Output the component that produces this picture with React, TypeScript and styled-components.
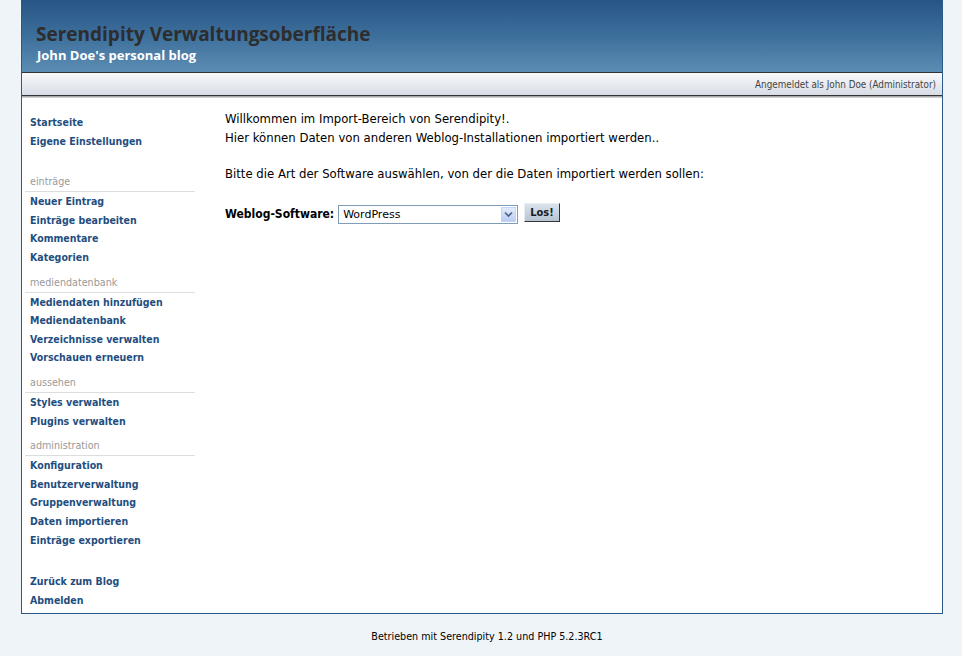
import styled, { createGlobalStyle } from "styled-components";

const GlobalStyle = createGlobalStyle`
  html, body {
    margin: 0;
    padding: 0;
    background: #eff4f9;
  }
  body {
    font-family: "DejaVu Sans", Verdana, sans-serif;
    font-size: 11px;
    color: #000;
  }
`

const Page = styled.div`
  width: 922px;
  margin-left: 21px;
`

const Frame = styled.div`
  border-left: 1px solid #2b5a8a;
  border-right: 1px solid #2b5a8a;
  border-bottom: 1px solid #2b5a8a;
  background: #fff;
`

const Banner = styled.div`
  height: 72px;
  background: linear-gradient(to bottom, #285585 0%, #3d6f9c 50%, #5b8db3 100%);
  padding-left: 14px;
  box-sizing: border-box;
  padding-top: 23px;
`

const Title = styled.h1`
  margin: 0;
  font-family: "Open Sans", sans-serif;
  font-weight: 700;
  font-size: 19px;
  line-height: 22px;
  color: #2d2d2d;
`

const Subtitle = styled.h2`
  margin: 2px 0 0 0;
  font-family: "Open Sans", sans-serif;
  font-weight: 700;
  font-size: 13px;
  line-height: 16px;
  color: #fff;
  padding-left: 1px;
`

const UserBar = styled.div`
  height: 22px;
  border-top: 1px solid #333;
  border-bottom: 1px solid #333;
  background: linear-gradient(to bottom, #f7f8fa 0%, #e9ecf1 50%, #d6dce6 100%);
  display: flex;
  align-items: center;
  justify-content: flex-end;
  padding-right: 6px;
  font-family: "DejaVu Sans Condensed", "DejaVu Sans", sans-serif;
  font-size: 9.8px;
  color: #444;
  box-shadow: 0 1px 0 #a9a9a9, 0 2px 0 #cfcfcf;
`

const Body = styled.div`
  display: flex;
  padding-top: 14px;
  padding-bottom: 4px;
`

const Sidebar = styled.nav`
  width: 170px;
  margin-left: 3px;
  padding-top: 3px;
  flex-shrink: 0;
`

const Group = styled.div<{ $gap: number }>`
  margin-bottom: ${p => p.$gap}px;
`

const GroupHead = styled.div`
  color: #999;
  font-size: 9.6px;
  line-height: 18px;
  padding-left: 5px;
  border-bottom: 1px solid #ddd;
`

const NavLink = styled.a`
  display: block;
  padding-left: 5px;
  font-family: "DejaVu Sans Condensed", "DejaVu Sans", sans-serif;
  font-weight: 700;
  font-size: 10.5px;
  line-height: 18.6px;
  color: #1f4e80;
  text-decoration: none;
`

const Main = styled.main`
  flex: 1;
  padding-left: 30px;
`

const Para = styled.p`
  margin: 0 0 18px 0;
  line-height: 18.5px;
  font-size: 11.7px;
`

const FormRow = styled.div`
  display: flex;
  align-items: center;
  gap: 4px;
  margin-top: 21px;
`

const Label = styled.label`
  font-family: "DejaVu Sans Condensed", "DejaVu Sans", sans-serif;
  font-weight: 700;
  font-size: 12px;
`

const SelectBox = styled.div`
  width: 178px;
  height: 17px;
  border: 1px solid #7f9db9;
  display: flex;
  align-items: center;
  background: #fff;
`

const SelectText = styled.span`
  flex: 1;
  padding-left: 4px;
  font-size: 11px;
`

const ArrowBox = styled.span`
  width: 15px;
  height: 15px;
  margin-right: 1px;
  background: linear-gradient(to bottom, #e2ebfb, #b9cdf3);
  border: 1px solid #c3d3fd;
  box-sizing: border-box;
  display: flex;
  align-items: center;
  justify-content: center;
`

const Button = styled.button`
  margin-left: 2px;
  height: 19px;
  padding: 0 5px;
  font-family: "DejaVu Sans Condensed", "DejaVu Sans", sans-serif;
  font-weight: 700;
  font-size: 11px;
  color: #1a1a1a;
  background: linear-gradient(to bottom, #dbe3ec, #b5c3d3);
  border: 1px solid;
  border-color: #e6ecf2 #333 #333 #e6ecf2;
  position: relative;
  top: -2px;
`

const Footer = styled.div`
  text-align: center;
  font-size: 9.6px;
  padding-top: 17px;
  margin-left: -21px;
  width: 962px;
  padding-left: 12px;
  box-sizing: border-box;
`

const groups = [
  { head: "", gap: 23, links: ["Startseite", "Eigene Einstellungen"] },
  { head: "einträge", gap: 7, links: ["Neuer Eintrag", "Einträge bearbeiten", "Kommentare", "Kategorien"] },
  { head: "mediendatenbank", gap: 7, links: ["Mediendaten hinzufügen", "Mediendatenbank", "Verzeichnisse verwalten", "Vorschauen erneuern"] },
  { head: "aussehen", gap: 7, links: ["Styles verwalten", "Plugins verwalten"] },
  { head: "administration", gap: 23, links: ["Konfiguration", "Benutzerverwaltung", "Gruppenverwaltung", "Daten importieren", "Einträge exportieren"] },
  { head: "", gap: 0, links: ["Zurück zum Blog", "Abmelden"] },
]

function App() {
  return (
    <>
      <GlobalStyle />
      <Page>
        <Frame>
          <Banner>
            <Title>Serendipity Verwaltungsoberfläche</Title>
            <Subtitle>John Doe's personal blog</Subtitle>
          </Banner>
          <UserBar>Angemeldet als John Doe (Administrator)</UserBar>
          <Body>
            <Sidebar>
              {groups.map((g, i) => (
                <Group key={i} $gap={g.gap}>
                  {g.head && <GroupHead>{g.head}</GroupHead>}
                  {g.links.map(l => (
                    <NavLink key={l} href="#">{l}</NavLink>
                  ))}
                </Group>
              ))}
            </Sidebar>
            <Main>
              <Para>
                Willkommen im Import-Bereich von Serendipity!.<br />
                Hier können Daten von anderen Weblog-Installationen importiert werden..
              </Para>
              <Para>Bitte die Art der Software auswählen, von der die Daten importiert werden sollen:</Para>
              <FormRow>
                <Label>Weblog-Software:</Label>
                <SelectBox>
                  <SelectText>WordPress</SelectText>
                  <ArrowBox>
                    <svg width="9" height="7" viewBox="0 0 9 7">
                      <path d="M1 1.5 L4.5 5 L8 1.5" fill="none" stroke="#4d6185" strokeWidth="1.6" />
                    </svg>
                  </ArrowBox>
                </SelectBox>
                <Button>Los!</Button>
              </FormRow>
            </Main>
          </Body>
        </Frame>
        <Footer>Betrieben mit Serendipity 1.2 und PHP 5.2.3RC1</Footer>
      </Page>
    </>
  )
}

export default App
